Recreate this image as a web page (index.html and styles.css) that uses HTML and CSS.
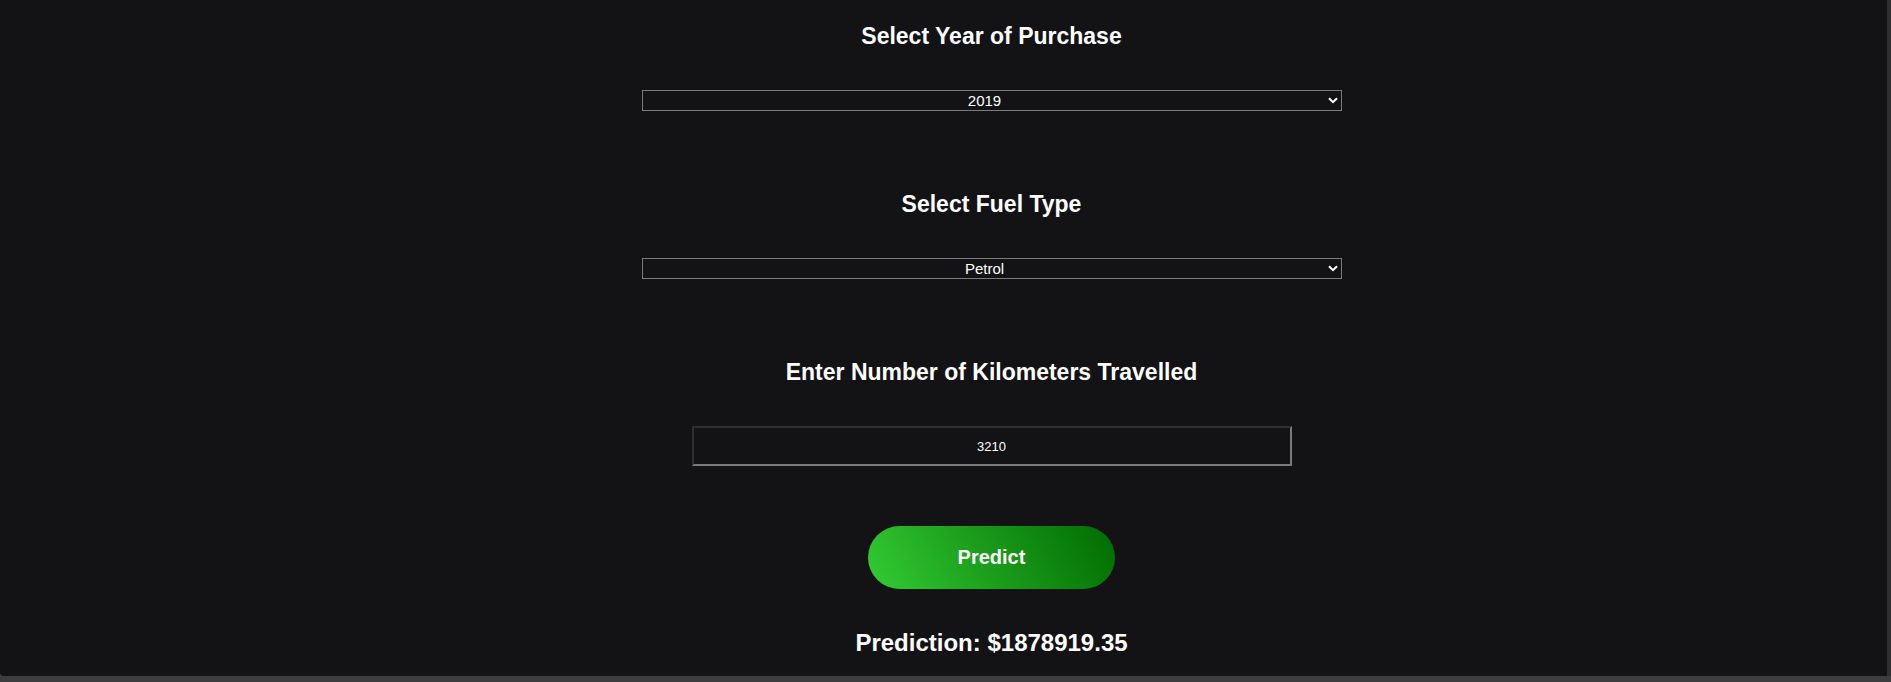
FILE: index.html
```html
<!DOCTYPE html>
<html lang="en">
<head>
<meta charset="utf-8">
<title>Car Price Prediction</title>
<link rel="stylesheet" href="styles.css">
</head>
<body>
<div class="frame">
  <main class="app">
    <h2 class="label">Select Year of Purchase</h2>
    <div class="select-wrap">
      <select class="picker">
        <option>2019</option>
      </select>
      <svg class="chevron" width="10" height="7" viewBox="0 0 10 7"><path d="M1 1.2 L5 5.2 L9 1.2" fill="none" stroke="#fff" stroke-width="2"/></svg>
    </div>

    <h2 class="label gap-top">Select Fuel Type</h2>
    <div class="select-wrap">
      <select class="picker">
        <option>Petrol</option>
      </select>
      <svg class="chevron" width="10" height="7" viewBox="0 0 10 7"><path d="M1 1.2 L5 5.2 L9 1.2" fill="none" stroke="#fff" stroke-width="2"/></svg>
    </div>

    <h2 class="label gap-top">Enter Number of Kilometers Travelled</h2>
    <input class="km" type="text" value="3210">

    <button class="predict">Predict</button>

    <h2 class="result">Prediction: $1878919.35</h2>
  </main>
  <div class="scroll-strip"></div>
</div>
</body>
</html>
```

FILE: styles.css
```css
html, body {
  margin: 0;
  padding: 0;
}

body {
  width: 1891px;
  height: 682px;
  background: #3d3d3d;
  overflow: hidden;
  font-family: "Liberation Sans", Arial, sans-serif;
  color: #ffffff;
}

.frame {
  display: flex;
  height: 676px;
}

.app {
  width: 1887px;
  height: 676px;
  box-sizing: border-box;
  padding: 22px 0 0 96px;
  background: #131316;
  border-bottom-left-radius: 4px;
  display: flex;
  flex-direction: column;
  align-items: center;
}

.scroll-strip {
  width: 4px;
  height: 676px;
  background: #2f2f31;
}

.label {
  margin: 0;
  font-size: 23px;
  line-height: 28px;
  font-weight: bold;
  color: #ffffff;
}

.gap-top {
  margin-top: 79px;
}

.select-wrap {
  position: relative;
  margin-top: 40px;
  width: 700px;
  height: 21px;
}

.picker {
  appearance: none;
  -webkit-appearance: none;
  display: block;
  width: 700px;
  height: 21px;
  box-sizing: border-box;
  margin: 0;
  padding: 0 18px 0 4px;
  border: 1px solid #7b7b7b;
  border-radius: 0;
  background: #131316;
  color: #ffffff;
  font-family: "Liberation Sans", Arial, sans-serif;
  font-size: 15px;
  line-height: 19px;
  text-align: center;
  text-align-last: center;
}

.chevron {
  position: absolute;
  right: 4px;
  top: 7px;
  pointer-events: none;
}

.km {
  margin-top: 40px;
  width: 600px;
  height: 40px;
  box-sizing: border-box;
  padding: 0;
  border-style: solid;
  border-width: 2px;
  border-color: #2e2e30 #7a7a7a #7a7a7a #2e2e30;
  background: #131316;
  color: #ffffff;
  font-family: "Liberation Sans", Arial, sans-serif;
  font-size: 13px;
  text-align: center;
  outline: none;
}

.predict {
  margin-top: 60px;
  width: 247px;
  height: 63px;
  border: none;
  border-radius: 32px;
  background: linear-gradient(60deg, #33cc33 0%, #1a9a1a 50%, #006b00 100%);
  color: #ffffff;
  font-family: "Liberation Sans", Arial, sans-serif;
  font-size: 20px;
  font-weight: bold;
  cursor: pointer;
}

.result {
  margin: 40px 0 0 0;
  font-size: 24px;
  line-height: 28px;
  font-weight: bold;
  color: #ffffff;
}
```
